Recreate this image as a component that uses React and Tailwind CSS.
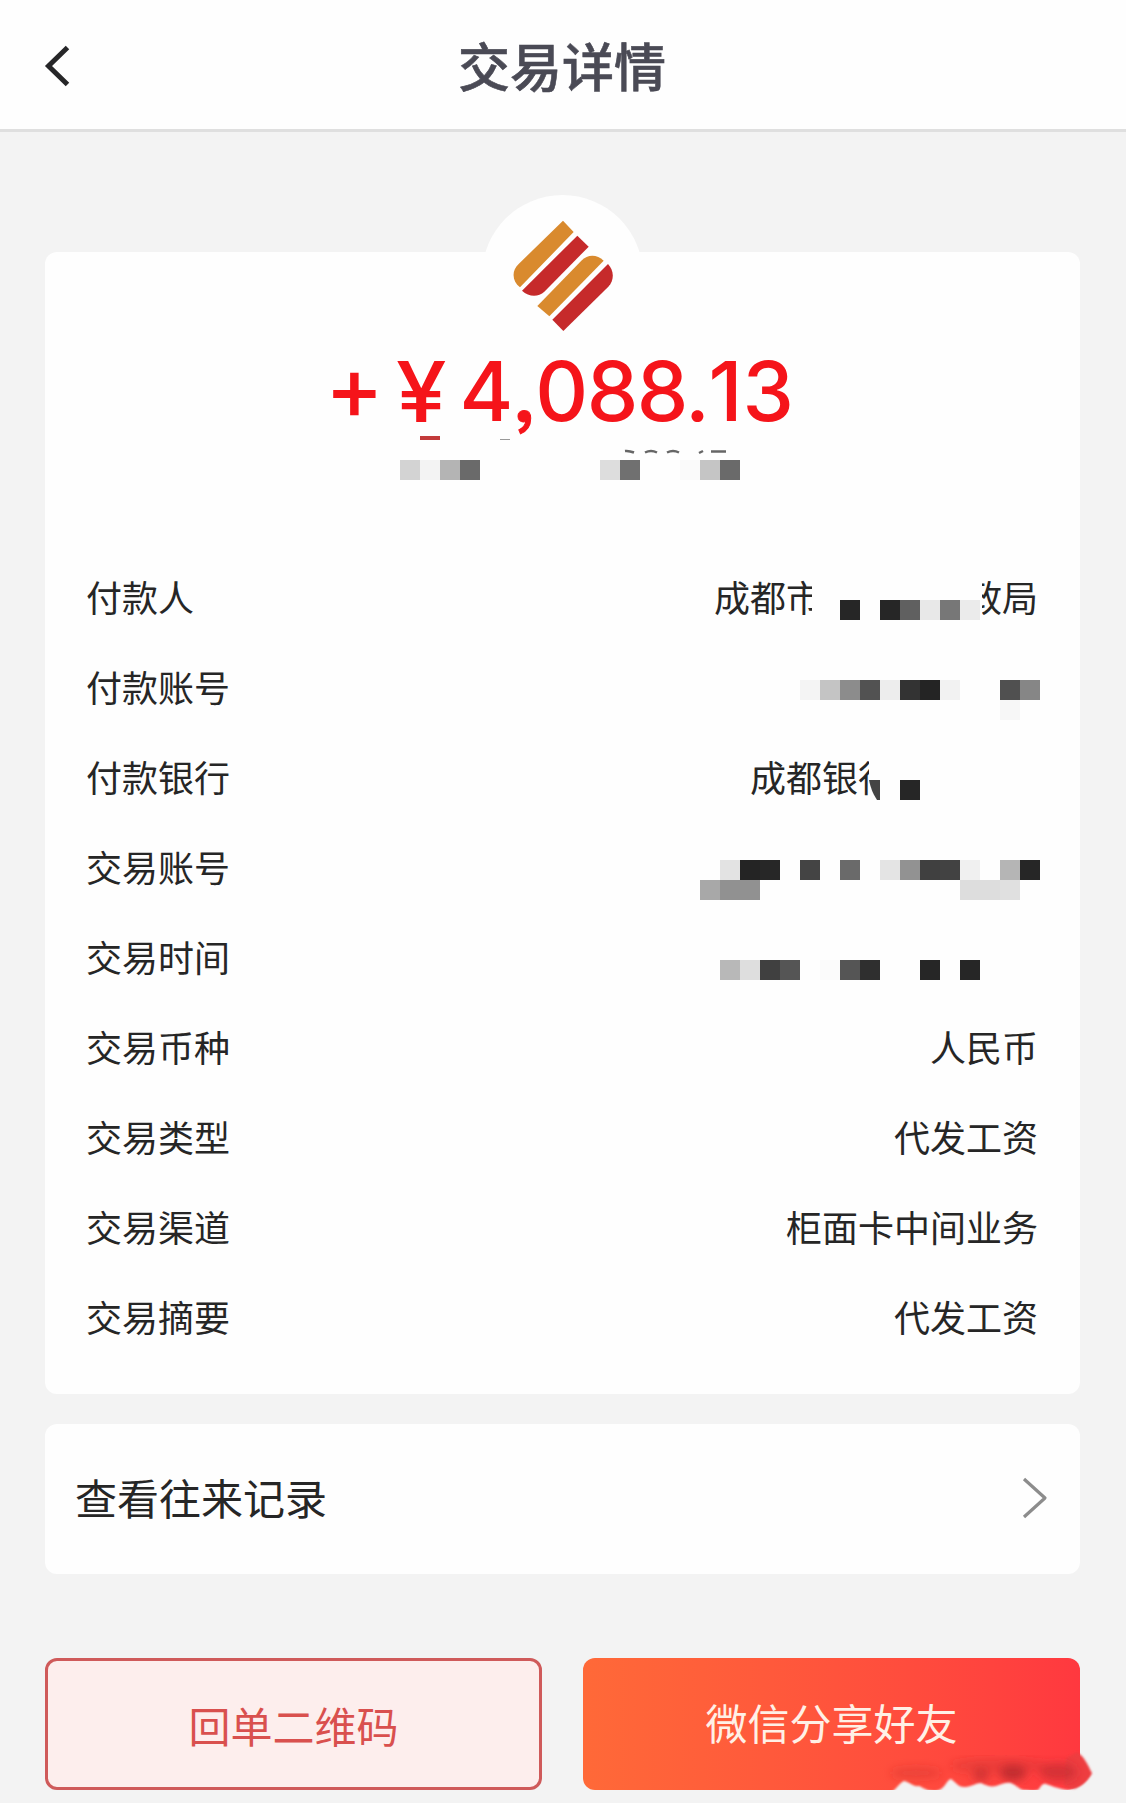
import React from 'react';

// One entry per row of tiles, null leaves a gap
const balanceTiles = [
    ['bg-[#d3d3d3]', 'bg-[#f3f3f3]', 'bg-[#b4b4b4]', 'bg-[#6a6a6a]', null, null, null, null, null, null, 'bg-[#dddddd]', 'bg-[#707070]', null, null, 'bg-[#fafafa]', 'bg-[#c5c5c5]', 'bg-[#6a6a6a]'],
];

const payerTiles = [
    ['bg-[#262626]', null, 'bg-[#262626]', 'bg-[#606060]', 'bg-[#e8e8e8]', 'bg-[#777777]', 'bg-[#ebebeb]'],
];

const payerAccountTiles = [
    ['bg-[#f4f4f4]', 'bg-[#c4c4c4]', 'bg-[#8c8c8c]', 'bg-[#525252]', 'bg-[#ededed]', 'bg-[#333333]', 'bg-[#242424]', 'bg-[#f2f2f2]', null, null, 'bg-[#505050]', 'bg-[#868686]'],
    [null, null, null, null, null, null, null, null, null, null, 'bg-[#f7f7f7]', null],
];

const accountTiles = [
    [null, 'bg-[#e3e3e3]', 'bg-[#242424]', 'bg-[#272727]', null, 'bg-[#444444]', null, 'bg-[#6a6a6a]', null, 'bg-[#e4e4e4]', 'bg-[#929292]', 'bg-[#404040]', 'bg-[#424242]', 'bg-[#f0f0f0]', null, 'bg-[#b5b5b5]', 'bg-[#262626]'],
    ['bg-[#a8a8a8]', 'bg-[#919191]', 'bg-[#919191]', null, null, null, null, null, null, null, null, null, null, 'bg-[#dddddd]', 'bg-[#dddddd]', 'bg-[#e0e0e0]', null],
];

const timeTiles = [
    ['bg-[#b8b8b8]', 'bg-[#dedede]', 'bg-[#404040]', 'bg-[#555555]', null, 'bg-[#fbfbfb]', 'bg-[#555555]', 'bg-[#2f2f2f]', null, null, 'bg-[#262626]', null, 'bg-[#262626]'],
];

const Mosaic = ({ rows, className }) => (
    <div className={className}>
        {rows.map((row, i) => (
            <div key={i} className="flex">
                {row.map((tile, j) => (
                    <span key={j} className={`block h-5 w-5 shrink-0 ${tile || ''}`} />
                ))}
            </div>
        ))}
    </div>
);

const Row = ({ label, children }) => (
    <div className="relative flex h-[90px] items-center justify-between pb-[5px] text-[36px] leading-none text-[#262626]">
        <span>{label}</span>
        {children}
    </div>
);

const BankLogo = () => (
    <svg className="h-[118px] w-[106px]" viewBox="150 111 318 354">
        <path fill="#d98a2e" d="M309 122 L341 156 L180 322 C156 304 154 272 176 252 Z" />
        <path fill="#c62a2b" d="M352 167 L386 200 L253 335 C235 352 207 352 186 332 Z" />
        <path fill="#d98a2e" d="M232 378 L268 409 L431 242 C411 223 384 222 364 242 Z" />
        <path fill="#c62a2b" d="M277 419 L310 453 L445 320 C463 301 463 272 444 252 Z" />
    </svg>
);

const Header = () => (
    <header className="relative flex h-[132px] items-center justify-center border-b-[3px] border-[#dfdfdf] bg-[#fefefe]">
        <button className="absolute left-[42px] top-[43px]">
            <svg className="h-[46px] w-[30px]" viewBox="0 0 30 46" fill="none" stroke="#262628" strokeWidth="5">
                <path d="M25.5 4.5 L6.5 23 L25.5 41.5" />
            </svg>
        </button>
        <h1 className="pr-[2px] text-[52px] font-medium leading-none text-[#4a4a55] [-webkit-text-stroke:0.6px_#4a4a55]">交易详情</h1>
    </header>
);

const Amount = () => (
    <div className="mt-[99px] flex h-[82px] items-center justify-center pr-[6px] font-[Inter,sans-serif] text-[82px] font-medium leading-none text-[#f5141a]">
        <span className="mr-[12px] pb-[11px] text-[88px]">+</span>
        <span className="mr-[17px] origin-left scale-x-108 text-[84px]">¥</span>
        <span>4</span>
        <span className="mx-[-1.5px] [-webkit-text-stroke:1px_#f5141a] [font-feature-settings:'ss03']">,</span>
        <span className="tracking-[-1.5px]">088.</span>
        <span>13</span>
    </div>
);

// Slivers of the balance line that stay visible above the tiles
const BalanceLine = () => (
    <div className="relative h-[60px]">
        <svg className="absolute left-[355px] top-[2px] h-[20px] w-[340px]" viewBox="400 435 340 20" fill="none">
            <path d="M420 438 H440" stroke="#c23a3a" strokeWidth="4" />
            <path d="M500 439.5 H510" stroke="#999999" strokeWidth="1" />
            <g stroke="#666666" strokeWidth="2.500">
                <path d="M625 451 Q629 450.5 634 452.5" />
                <path d="M645 452.5 Q651 449.5 657 452.5" />
                <path d="M667 452.5 Q673 449.5 679 452.5" />
                <path d="M699 453 L703 451" />
                <path d="M711 451.5 H726" />
            </g>
        </svg>
        <Mosaic rows={balanceTiles} className="absolute left-[355px] top-[27px]" />
    </div>
);

const Smudge = () => (
    <svg className="absolute -right-[30px] bottom-[-14px] h-[56px] w-[240px]" viewBox="0 0 240 56">
        <defs>
            <filter id="soft"><feGaussianBlur stdDeviation="1.2" /></filter>
            <filter id="softer"><feGaussianBlur stdDeviation="4" /></filter>
        </defs>
        <path filter="url(#soft)" fill="#ee3d40" d="M207 4 C216 10 219 20 222 25 C220 32 214 38 205 42 L194 38 L196 10 Z" />
        <g filter="url(#softer)" fill="#c02c30">
            <ellipse cx="130" cy="18" rx="50" ry="8" opacity=".3" />
            <ellipse cx="111" cy="27" rx="8" ry="7" opacity=".65" />
            <ellipse cx="143" cy="25" rx="13" ry="8" opacity=".95" />
            <ellipse cx="188" cy="24" rx="18" ry="9" opacity=".65" />
            <ellipse cx="46" cy="25" rx="26" ry="6" opacity=".3" />
        </g>
        <path filter="url(#soft)" fill="#f3f3f3" d="M20 45 C26 42 30 34 34 33 C40 34 43 39 49 38 C54 40 57 43 64 43 C75 43 76 32 81 31 C86 34 88 40 96 39 C103 38 106 35 111 35 C117 38 121 39 126 38 C132 36 136 34 141 35 C148 38 149 42 156 42 C160 43 165 43 168 42 C171 39 172 35 176 36 C182 38 187 40 192 41 C198 43 205 42 210 39 C216 36 220 29 224 27 L240 27 V56 H20 Z" />
    </svg>
);

const App = () => {
    return (
        <div className="h-[1803px] w-[1126px] overflow-hidden bg-[#f3f3f3] font-['Noto_Sans_CJK_SC',sans-serif]">
            <Header />

            <main className="px-[45px] pt-[120px]">
                <section className="relative h-[1142px] w-[1035px] rounded-[12px] bg-[#fefefe]">
                    <div className="absolute -top-[57px] left-[437px] flex h-[161px] w-[161px] justify-center rounded-full bg-[#fefefe] pt-[22px]">
                        <BankLogo />
                    </div>

                    <div className="flow-root">
                        <Amount />
                        <BalanceLine />
                    </div>

                    <div className="mt-[60px] pl-[41px] pr-[42px]">
                        <Row label="付款人">
                            <div className="flex w-[324px] justify-between">
                                <span>成都市</span>
                                <span>政局</span>
                            </div>
                            <span className="absolute right-[56px] top-[20px] h-[50px] w-[170px] bg-[#fefefe]" />
                            <Mosaic rows={payerTiles} className="absolute right-[58px] top-[47px]" />
                        </Row>
                        <Row label="付款账号">
                            <Mosaic rows={payerAccountTiles} className="-mr-[2px] mt-[37px] self-start" />
                        </Row>
                        <Row label="付款银行">
                            <span className="w-[288px]">成都银行</span>
                            <span className="absolute right-[138px] top-[20px] h-[50px] w-[31px] bg-[#fefefe]" />
                            <svg className="absolute right-[158px] top-[47px] h-[20px] w-[11px]" viewBox="0 0 11 20">
                                <path fill="#444444" d="M0 0 H11 V20 H8 Q2 11 0 0 Z" />
                            </svg>
                            <span className="absolute right-[118px] top-[47px] h-5 w-5 bg-[#262626]" />
                        </Row>
                        <Row label="交易账号">
                            <Mosaic rows={accountTiles} className="-mr-[2px] mt-[37px] self-start" />
                        </Row>
                        <Row label="交易时间">
                            <Mosaic rows={timeTiles} className="mr-[58px] mt-[47px] self-start" />
                        </Row>
                        <Row label="交易币种"><span>人民币</span></Row>
                        <Row label="交易类型"><span>代发工资</span></Row>
                        <Row label="交易渠道"><span>柜面卡中间业务</span></Row>
                        <Row label="交易摘要"><span>代发工资</span></Row>
                    </div>
                </section>

                <section className="mt-[30px] flex h-[150px] w-[1035px] items-center justify-between rounded-[12px] bg-[#fefefe] pb-[3px] pl-[30px] pr-[32px] text-[42px] leading-none text-[#262626]">
                    <span className="pb-[2px]">查看往来记录</span>
                    <svg className="h-[42px] w-[26px]" viewBox="0 0 26 42" fill="none" stroke="#8c8c8c" strokeWidth="3.2" strokeLinejoin="round">
                        <path d="M2 2 L23 21 L2 40" />
                    </svg>
                </section>

                <div className="mt-[84px] flex gap-[41px]">
                    <button className="h-[132px] w-[497px] rounded-[12px] border-[3px] border-[#cf5a5a] bg-[#fdeeed] pt-[1px] text-[42px] leading-none text-[#d9504e]">
                        回单二维码
                    </button>
                    <div className="relative">
                        <button className="h-[132px] w-[497px] rounded-[12px] bg-gradient-to-r from-[#ff6938] to-[#ff383f] pb-[4px] text-[42px] leading-none text-[#fff0e6]">
                            微信分享好友
                        </button>
                        <Smudge />
                    </div>
                </div>
            </main>
        </div>
    );
};

export default App;
